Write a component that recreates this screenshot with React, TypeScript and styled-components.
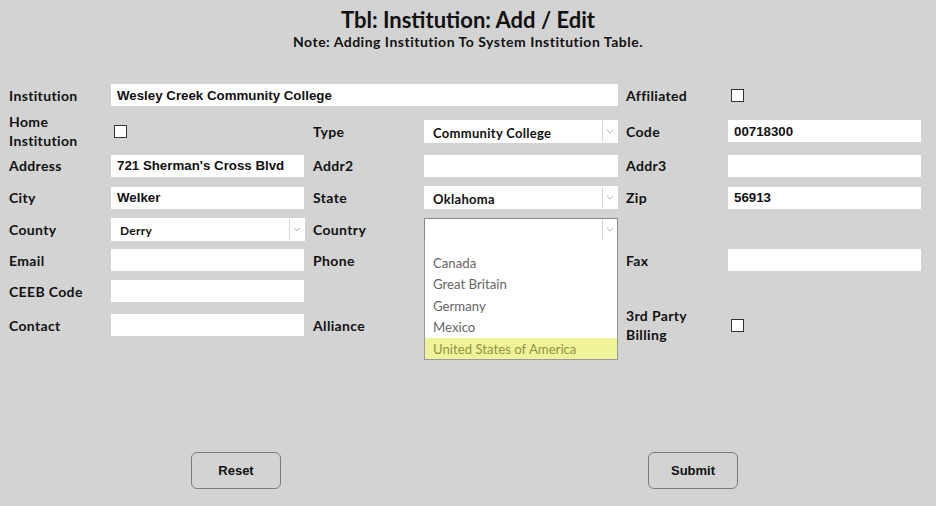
import React from "react";
import styled, { createGlobalStyle } from "styled-components";

const GlobalStyle = createGlobalStyle`
  html, body {
    margin: 0;
    padding: 0;
    background: #d3d3d3;
  }
  body {
    font-family: "Lato", "Noto Sans", sans-serif;
    color: #111;
  }
`;

const Page = styled.div`
  width: 936px;
  height: 506px;
  display: flex;
  flex-direction: column;
  background: #d3d3d3;
`;

const Header = styled.div`
  display: flex;
  flex-direction: column;
  align-items: center;
  padding-top: 7px;
`;

const Title = styled.h1`
  margin: 0;
  font-size: 22px;
  font-weight: 700;
  line-height: 26px;
`;

const Subtitle = styled.p`
  margin: 0;
  font-size: 14px;
  font-weight: 700;
  line-height: 18px;
  letter-spacing: 0.5px;
`;

const FormGrid = styled.div`
  display: grid;
  grid-template-columns: 102px 202px 111px 202px 102px 193px;
  grid-template-rows: 36px 36px 33px 31px 32px 30px 32px 36px;
  align-items: center;
  padding-left: 9px;
  margin-top: 26px;
`;

const Label = styled.label`
  font-size: 14px;
  font-weight: 700;
  line-height: 19px;
  letter-spacing: 0.35px;
`;

const TextInput = styled.input<{ $wide?: boolean }>`
  box-sizing: border-box;
  width: ${(p) => (p.$wide ? "507px" : "193px")};
  height: 22px;
  border: none;
  outline: none;
  background: #fff;
  padding: 0 6px;
  font-family: "Liberation Sans", Arial, sans-serif;
  font-weight: 700;
  font-size: 13.3px;
  color: #111;
`;

const Wide = styled.div`
  grid-column: 2 / span 3;
`;

const SelectWrap = styled.div`
  position: relative;
  width: 194px;
`;

const SelectBox = styled.div<{ $open?: boolean }>`
  box-sizing: border-box;
  display: flex;
  align-items: center;
  height: 23px;
  background: #fff;
  border: 1px solid ${(p) => (p.$open ? "#8a8a8a" : "#fff")};
`;

const SelectValue = styled.span<{ $small?: boolean }>`
  flex: 1;
  padding-left: 8px;
  padding-top: 3px;
  font-size: ${(p) => (p.$small ? "12px" : "13px")};
  font-weight: 700;
  letter-spacing: 0.3px;
  color: #111;
`;

const Arrow = styled.span`
  width: 14px;
  height: 100%;
  display: flex;
  align-items: center;
  justify-content: center;
  border-left: 1px solid #d8d8d8;
`;

const Menu = styled.ul`
  position: absolute;
  top: 22px;
  left: 0;
  width: 194px;
  box-sizing: border-box;
  margin: 0;
  padding: 12px 0 0;
  list-style: none;
  background: #fff;
  border: 1px solid #9a9a9a;
  border-top: none;
  z-index: 5;
`;

const MenuItem = styled.li<{ $active?: boolean }>`
  height: 21.5px;
  line-height: 22px;
  padding-left: 8px;
  font-size: 13.2px;
  color: ${(p) => (p.$active ? "#8f9446" : "#666")};
  background: ${(p) => (p.$active ? "#eef39a" : "transparent")};
`;

const Check = styled.span`
  display: inline-block;
  width: 11px;
  height: 11px;
  border: 1px solid #333;
  background: #fff;
  margin-left: 3px;
`;

const Buttons = styled.div`
  display: flex;
  justify-content: space-between;
  padding: 0 198px 0 191px;
  margin-top: 109px;
`;

const Button = styled.button`
  width: 90px;
  height: 37px;
  border: 1px solid #7a7a7a;
  border-radius: 6px;
  background: transparent;
  font-family: "Liberation Sans", Arial, sans-serif;
  font-size: 13px;
  font-weight: 700;
  color: #111;
`;

const Chevron = () => (
  <svg width="8" height="5" viewBox="0 0 8 5">
    <path d="M1 1 L4 4 L7 1" fill="none" stroke="#b5b5b5" strokeWidth="1" />
  </svg>
);

const Select = ({
  value,
  open,
  options,
  active,
  small,
}: {
  value?: string;
  open?: boolean;
  options?: string[];
  active?: string;
  small?: boolean;
}) => (
  <SelectWrap>
    <SelectBox $open={open}>
      <SelectValue $small={small}>{value}</SelectValue>
      <Arrow>
        <Chevron />
      </Arrow>
    </SelectBox>
    {open && options && (
      <Menu>
        {options.map((o) => (
          <MenuItem key={o} $active={o === active}>
            {o}
          </MenuItem>
        ))}
      </Menu>
    )}
  </SelectWrap>
);

const App = (): React.ReactElement => {
  return (
    <Page>
      <GlobalStyle />
      <Header>
        <Title>Tbl: Institution: Add / Edit</Title>
        <Subtitle>Note: Adding Institution To System Institution Table.</Subtitle>
      </Header>
      <FormGrid>
        <Label>Institution</Label>
        <Wide>
          <TextInput $wide defaultValue="Wesley Creek Community College" />
        </Wide>
        <Label>Affiliated</Label>
        <div>
          <Check />
        </div>

        <Label>
          Home
          <br />
          Institution
        </Label>
        <div>
          <Check />
        </div>
        <Label>Type</Label>
        <Select value="Community College" />
        <Label>Code</Label>
        <TextInput defaultValue="00718300" />

        <Label>Address</Label>
        <TextInput defaultValue="721 Sherman's Cross Blvd" />
        <Label>Addr2</Label>
        <TextInput style={{ width: 194 }} />
        <Label>Addr3</Label>
        <TextInput />

        <Label>City</Label>
        <TextInput defaultValue="Welker" />
        <Label>State</Label>
        <Select value="Oklahoma" />
        <Label>Zip</Label>
        <TextInput defaultValue="56913" />

        <Label>County</Label>
        <Select value="Derry" small />
        <Label>Country</Label>
        <Select
          open
          options={[
            "Canada",
            "Great Britain",
            "Germany",
            "Mexico",
            "United States of America",
          ]}
          active="United States of America"
        />
        <div />
        <div />

        <Label>Email</Label>
        <TextInput />
        <Label>Phone</Label>
        <div />
        <Label>Fax</Label>
        <TextInput />

        <Label>CEEB Code</Label>
        <TextInput />
        <div />
        <div />
        <div />
        <div />

        <Label>Contact</Label>
        <TextInput />
        <Label>Alliance</Label>
        <div />
        <Label>
          3rd Party
          <br />
          Billing
        </Label>
        <div>
          <Check />
        </div>
      </FormGrid>
      <Buttons>
        <Button>Reset</Button>
        <Button>Submit</Button>
      </Buttons>
    </Page>
  );
};

export default App;
